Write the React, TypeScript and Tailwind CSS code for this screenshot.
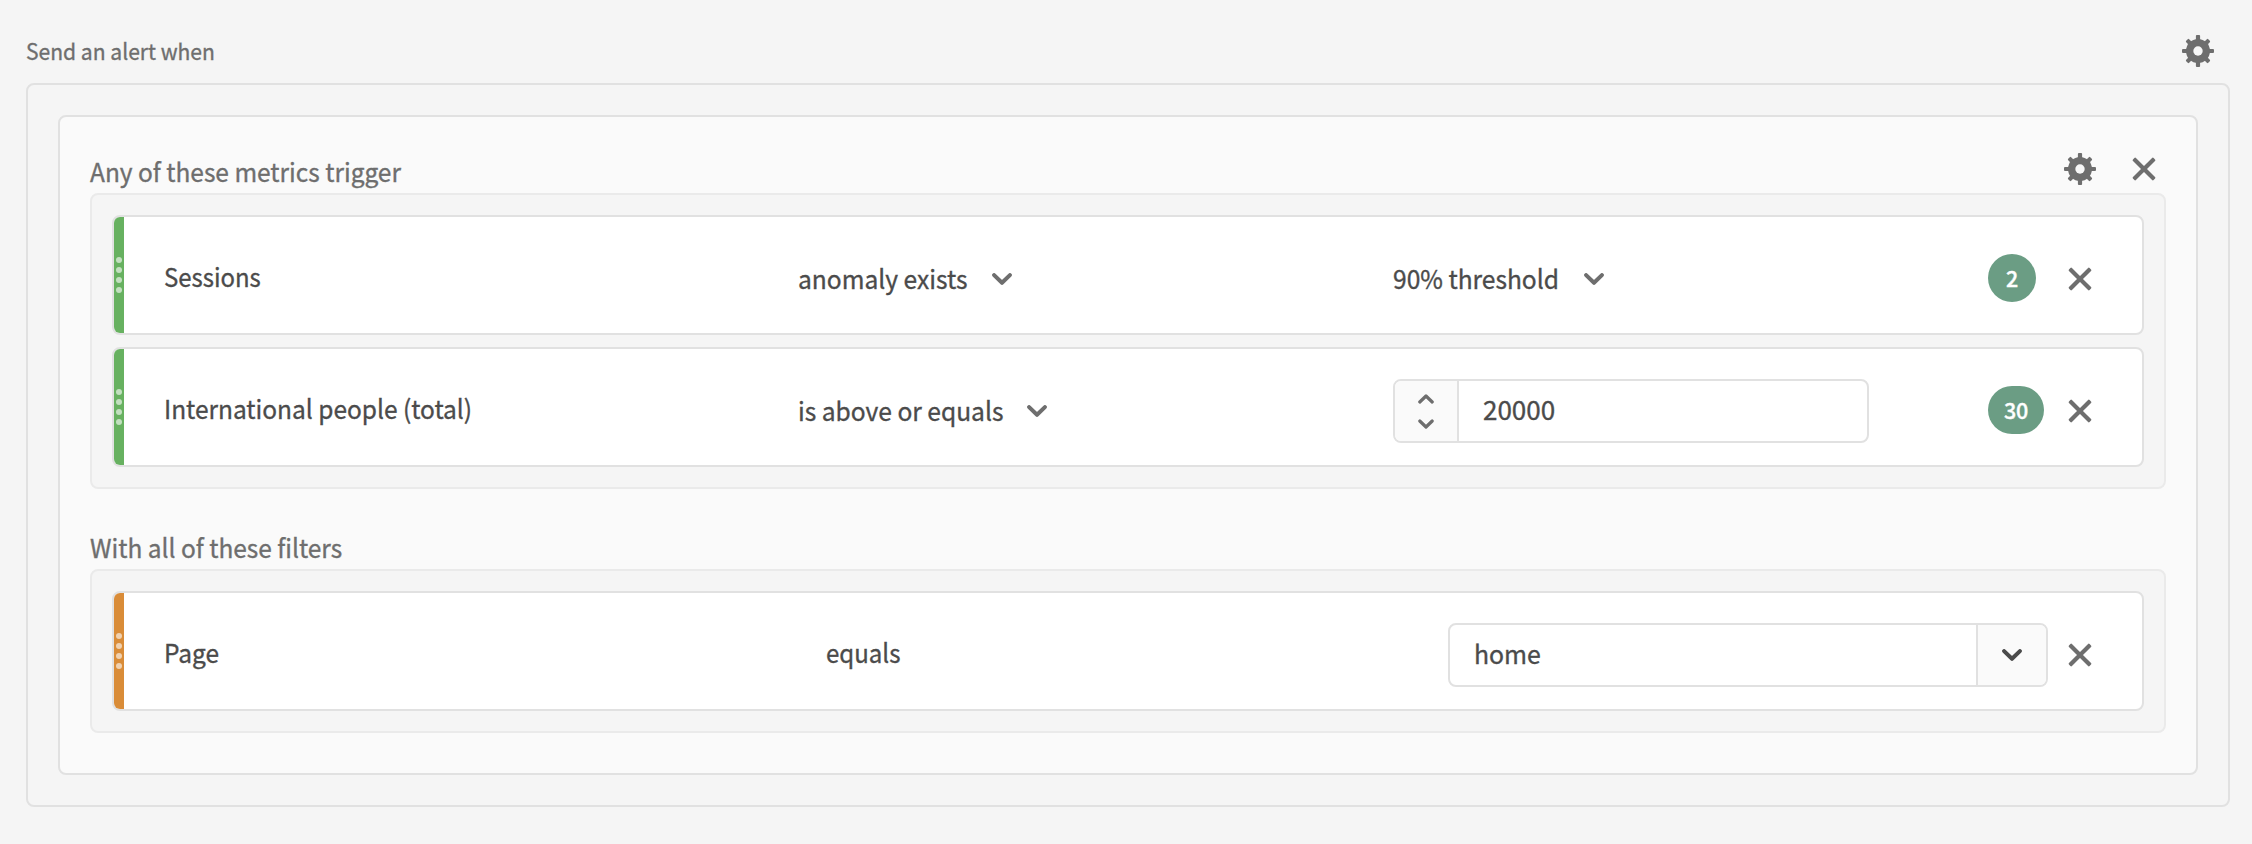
import type { ReactNode } from "react";

const Gear = () => (
  <svg width="32" height="32" viewBox="-16 -16 32 32" fill="#6e6e6e" className="block shrink-0">
    {[0, 45, 90, 135].map((angle) => (
      <rect key={angle} x="-2.1" y={angle % 90 ? -15.6 : -16} width="4.2" height={angle % 90 ? 31.2 : 32} rx="1" transform={`rotate(${angle})`} />
    ))}
    <circle r="12" />
    <circle r="4.7" fill="#f7f7f7" />
  </svg>
);

const Cross = () => (
  <svg width="32" height="32" viewBox="-16 -16 32 32" fill="#6e6e6e" className="block shrink-0">
    <rect x="-14.6" y="-2.1" width="29.2" height="4.2" rx="1.1" transform="rotate(45)" />
    <rect x="-14.6" y="-2.1" width="29.2" height="4.2" rx="1.1" transform="rotate(-45)" />
  </svg>
);

const Chevron = ({ color = "#6e6e6e" }: { color?: string }) => (
  <svg width="20" height="12" viewBox="0 0 20 12" fill="none" stroke={color} strokeWidth="4" strokeLinecap="round" strokeLinejoin="round" className="block shrink-0">
    <path d="M2.1 2.1 10 9.8 17.9 2.1" />
  </svg>
);

const StepArrow = ({ up }: { up?: boolean }) => (
  <svg width="16" height="10" viewBox="0 0 16 10" fill="none" stroke="#6e6e6e" strokeWidth="3.2" strokeLinecap="round" strokeLinejoin="round" className="block">
    <path d={up ? "M1.8 8 8 2 14.2 8" : "M1.8 2 8 8 14.2 2"} />
  </svg>
);

const Text = ({ children, scale = "scale-x-[0.941]" }: { children: ReactNode; scale?: string }) => (
  <span className={`block origin-left whitespace-nowrap ${scale}`}>{children}</span>
);

const Grip = ({ className }: { className: string }) => (
  <div className={`flex h-full flex-col items-center justify-center gap-1 ${className}`}>
    {[0, 1, 2, 3].map((dot) => (
      <span key={dot} className="size-1.5 rounded-full bg-white/60" />
    ))}
  </div>
);

const Picker = ({ label, width }: { label: string; width: string }) => (
  <div className="flex items-center pt-2">
    <div className={`pb-[2px] ${width}`}>
      <Text scale="scale-x-[0.945]">{label}</Text>
    </div>
    <Chevron />
  </div>
);

const Badge = ({ value }: { value: string }) => (
  <div className="pt-1.5">
    <span className="flex h-12 w-fit min-w-12 items-center justify-center rounded-full bg-[#6b9d84] px-4 text-[21.5px] font-medium leading-8 tracking-[-0.3px] text-white">
      {value}
    </span>
  </div>
);

const Row = ({ name, grip, scale, children }: { name: string; grip: string; scale?: string; children: ReactNode }) => (
  <div className="grid h-[120px] grid-cols-[10px_674px_595px_595px_76px_1fr] items-center overflow-hidden rounded-lg border-2 border-[#e1e1e1] bg-white text-[#4b4b4b]">
    <Grip className={grip} />
    <div className="pl-[39.5px] pt-0.5">
      <Text scale={scale}>{name}</Text>
    </div>
    {children}
    <div className="pt-2">
      <Cross />
    </div>
  </div>
);

const Group = ({ children }: { children: ReactNode }) => (
  <div className="flex flex-col gap-3 rounded-lg border-2 border-[#eaeaea] bg-[#f5f5f5] p-5">{children}</div>
);

export default function App() {
  return (
    <div className="h-[844px] w-[2252px] overflow-hidden bg-[#f5f5f5] pl-[26px] pr-[22px] font-['Noto_Sans_CJK_JP','Noto_Sans',sans-serif] text-[26px] leading-10 text-[#6e6e6e] [-webkit-text-stroke:0.35px_currentColor]">
      <header className="flex h-[83px] items-center justify-between pr-4 pt-[19px]">
        <div className="pb-[3px] text-[22.3px]">
          <Text scale="scale-x-[0.945]">Send an alert when</Text>
        </div>
        <Gear />
      </header>
      <section className="rounded-lg border-2 border-[#e1e1e1] p-[30px]">
        <div className="rounded-lg border-2 border-[#e1e1e1] bg-[#fafafa] px-[30px] pb-10">
          <div className="flex h-[76px] items-center justify-between pr-1.5 pt-7">
            <div className="pt-[3px]">
              <Text>Any of these metrics trigger</Text>
            </div>
            <div className="flex gap-8">
              <Gear />
              <Cross />
            </div>
          </div>
          <Group>
            <Row name="Sessions" grip="bg-[#67b160]" scale="scale-x-[0.92]">
              <Picker label="anomaly exists" width="w-[194px]" />
              <Picker label="90% threshold" width="w-[191px]" />
              <Badge value="2" />
            </Row>
            <Row name="International people (total)" grip="bg-[#67b160]">
              <Picker label="is above or equals" width="w-[229px]" />
              <div className="pt-2">
                <div className="flex h-16 w-[476px] overflow-hidden rounded-lg border-2 border-[#e1e1e1]">
                  <div className="flex w-16 flex-col items-center justify-center gap-[15px] border-r-2 border-[#e1e1e1] bg-[#fafafa]">
                    <StepArrow up />
                    <StepArrow />
                  </div>
                  <div className="flex items-center pb-1 pl-6">20000</div>
                </div>
              </div>
              <Badge value="30" />
            </Row>
          </Group>
          <div className="flex h-20 items-center pt-9">
            <Text>With all of these filters</Text>
          </div>
          <Group>
            <Row name="Page" grip="bg-[#d98c38]">
              <div className="pl-7 pt-0.5">
                <Text scale="scale-x-[0.925]">equals</Text>
              </div>
              <div className="col-span-2 pl-[55px] pt-2">
                <div className="flex h-16 w-[600px] overflow-hidden rounded-lg border-2 border-[#e1e1e1]">
                  <div className="flex flex-1 items-center pb-1 pl-6">
                    <Text scale="scale-x-[0.955]">home</Text>
                  </div>
                  <div className="flex w-[70px] items-center justify-center border-l-2 border-[#e1e1e1] bg-[#fafafa]">
                    <Chevron color="#4b4b4b" />
                  </div>
                </div>
              </div>
            </Row>
          </Group>
        </div>
      </section>
    </div>
  );
}
